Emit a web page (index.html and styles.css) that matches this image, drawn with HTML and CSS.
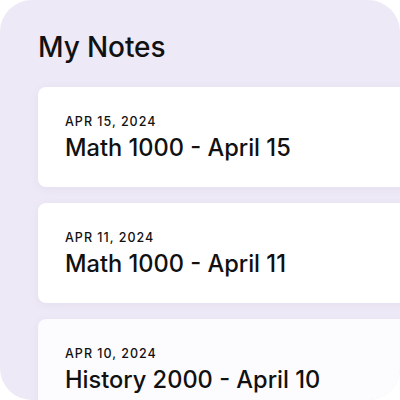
FILE: index.html
```html
<!DOCTYPE html>
<html>
<head>
<meta charset="utf-8">
<link rel="stylesheet" href="styles.css">
</head>
<body>
<div class="panel">
  <h1 class="heading">My Notes</h1>
  <div class="list">
    <div class="card">
      <div class="date">APR 15, 2024</div>
      <div class="title">Math 1000 - April 15</div>
    </div>
    <div class="card">
      <div class="date">APR 11, 2024</div>
      <div class="title">Math 1000 - April 11</div>
    </div>
    <div class="card card-faded">
      <div class="date">APR 10, 2024</div>
      <div class="title">History 2000 - April 10</div>
    </div>
  </div>
</div>
</body>
</html>
```
FILE: styles.css
```css
html, body {
  margin: 0;
  padding: 0;
  background: #ffffff;
}
body {
  width: 400px;
  height: 400px;
  overflow: hidden;
  font-family: Inter, "Noto Sans", sans-serif;
  color: #111111;
}
.panel {
  width: 400px;
  height: 400px;
  box-sizing: border-box;
  background: #eee9f6;
  border-radius: 32px;
  overflow: hidden;
  padding: 30px 0 0 38px;
}
.heading {
  margin: 0;
  font-size: 28px;
  line-height: 34px;
  font-weight: 500;
  letter-spacing: -0.1px;
}
.list {
  display: flex;
  flex-direction: column;
  gap: 16px;
  margin-top: 23px;
  width: 400px;
}
.card {
  background: #ffffff;
  border-radius: 8px;
  height: 100px;
  box-sizing: border-box;
  padding: 27px 0 0 27px;
  box-shadow: 0 2px 8px rgba(120, 100, 160, 0.08);
  flex: none;
}
.card-faded {
  background: #fcfcfe;
}
.date {
  font-size: 12.5px;
  line-height: 16px;
  font-weight: 500;
  letter-spacing: 1px;
}
.title {
  margin-top: 3px;
  font-size: 23.6px;
  line-height: 30px;
  font-weight: 500;
}
```
